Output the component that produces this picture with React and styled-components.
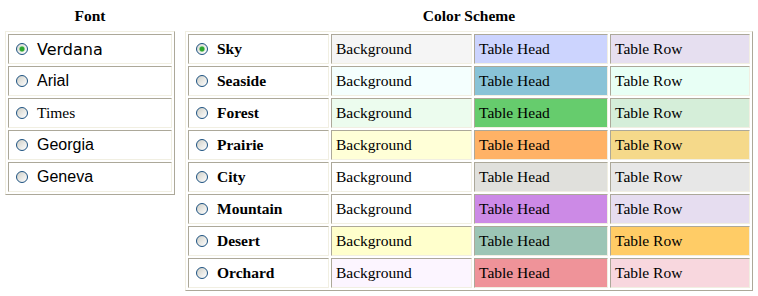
import React from 'react'
import styled, { createGlobalStyle } from 'styled-components'

const Global = createGlobalStyle`
body{
  margin:0;
  background:#ffffff;
  font-family:"Liberation Serif", "Times New Roman", serif;
  color:#000;
}
`

const Page = styled.div`
display:flex;
align-items:flex-start;
gap:10px;
padding:5px 0 0 5px;
`

const Column = styled.div`
display:flex;
flex-direction:column;
width:${p => p.$width}px;
`

const Heading = styled.h3`
margin:0 0 4px 0;
height:22px;
line-height:22px;
text-align:center;
font-size:15.5px;
font-weight:bold;
`

const Table = styled.table`
border-collapse:separate;
border-spacing:2px;
border:1px solid;
border-color:#f1efe2 #aca899 #aca899 #f1efe2;
table-layout:fixed;
`

const Cell = styled.td`
box-sizing:border-box;
width:${p => p.$width}px;
height:30px;
padding:0 4px;
border:1px solid;
border-color:#aca899 #f1efe2 #f1efe2 #aca899;
background:${p => p.$bg || '#ffffff'};
font-size:15.5px;
white-space:nowrap;
vertical-align:middle;
`

const Label = styled.label`
display:flex;
align-items:center;
gap:9px;
font-family:${p => p.$font || '"Liberation Serif", serif'};
font-size:${p => p.$size || 16}px;
font-weight:${p => (p.$bold ? 'bold' : 'normal')};
`

const Radio = styled.input.attrs({ type: 'radio' })`
appearance:none;
margin:0 0 0 3px;
width:12px;
height:12px;
border-radius:50%;
border:1px solid #1c5180;
box-sizing:border-box;
background:${p => (p.checked
    ? 'radial-gradient(circle, #2ea62e 0 2px, #8fd08f 2.6px, transparent 3.2px), linear-gradient(135deg, #d8d8d2, #ffffff)'
    : 'linear-gradient(135deg, #cfcfc7, #ffffff)')};
`

const fonts = [
  { name: 'Verdana', font: '"DejaVu Sans", Verdana, sans-serif', size: 16 },
  { name: 'Arial', font: '"Liberation Sans", Arial, sans-serif', size: 16 },
  { name: 'Times', font: '"Liberation Serif", serif', size: 15.5 },
  { name: 'Georgia', font: '"Liberation Sans", Arial, sans-serif', size: 16 },
  { name: 'Geneva', font: '"Liberation Sans", Arial, sans-serif', size: 16 },
]

const schemes = [
  { name: 'Sky', bg: '#f5f5f5', head: '#ccd4fe', row: '#e6dff0' },
  { name: 'Seaside', bg: '#f4fffe', head: '#89c3d7', row: '#e8fff5' },
  { name: 'Forest', bg: '#ecfcee', head: '#66cc6d', row: '#d5eed9' },
  { name: 'Prairie', bg: '#ffffd7', head: '#ffb266', row: '#f5d98a' },
  { name: 'City', bg: '#ffffff', head: '#e0e0dc', row: '#e7e7e7' },
  { name: 'Mountain', bg: '#ffffff', head: '#cc8ae6', row: '#e6ddf0' },
  { name: 'Desert', bg: '#ffffcc', head: '#9cc5b5', row: '#ffcc66' },
  { name: 'Orchard', bg: '#fcf5ff', head: '#ef9399', row: '#f8d7de' },
]

const App = () => {
  return (
    <>
      <Global />
      <Page>
        <Column $width={170}>
          <Heading>Font</Heading>
          <Table>
            <tbody>
              {fonts.map((f, i) => (
                <tr key={f.name}>
                  <Cell $width={164}>
                    <Label $font={f.font} $size={f.size}>
                      <Radio name="font" checked={i === 0} readOnly />
                      {f.name}
                    </Label>
                  </Cell>
                </tr>
              ))}
            </tbody>
          </Table>
        </Column>
        <Column $width={568}>
          <Heading>Color Scheme</Heading>
          <Table>
            <tbody>
              {schemes.map((s, i) => (
                <tr key={s.name}>
                  <Cell $width={141}>
                    <Label $bold $size={15.5}>
                      <Radio name="scheme" checked={i === 0} readOnly />
                      {s.name}
                    </Label>
                  </Cell>
                  <Cell $width={141} $bg={s.bg}>Background</Cell>
                  <Cell $width={134} $bg={s.head}>Table Head</Cell>
                  <Cell $width={140} $bg={s.row}>Table Row</Cell>
                </tr>
              ))}
            </tbody>
          </Table>
        </Column>
      </Page>
    </>
  )
}

export default App
